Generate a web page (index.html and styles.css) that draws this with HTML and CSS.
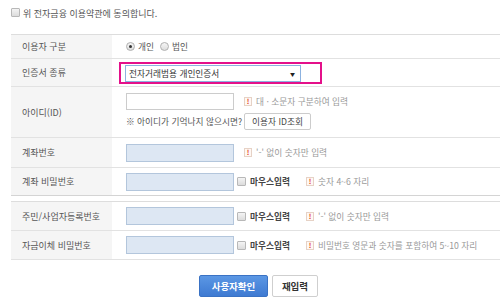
FILE: index.html
```html
<!DOCTYPE html>
<html lang="ko">
<head>
    <meta charset="UTF-8">
    <title>이용자 확인</title>
    <link rel="stylesheet" href="styles.css">
</head>
<body>
    <div class="agree">
        <span class="check"></span>
        <span>위 전자금융 이용약관에 동의합니다.</span>
    </div>

    <div class="form-table">
        <div class="row row-type">
            <div class="label">이용자 구분</div>
            <div class="field">
                <span class="radio on"></span><span class="radio-text">개인</span>
                <span class="radio"></span><span class="radio-text">법인</span>
            </div>
        </div>
        <div class="row row-cert">
            <div class="label">인증서 종류</div>
            <div class="field field-cert">
                <div class="highlight">
                    <div class="select">
                        <span>전자거래범용 개인인증서</span>
                        <span class="arrow">▼</span>
                    </div>
                </div>
            </div>
        </div>
        <div class="row row-id">
            <div class="label">아이디(ID)</div>
            <div class="field field-stack">
                <div class="line">
                    <span class="input white"></span>
                    <span class="warn">!</span>
                    <span class="hint">대 · 소문자 구분하여 입력</span>
                </div>
                <div class="line line-find">
                    <span class="find-text">※ 아이디가 기억나지 않으시면?</span>
                    <span class="small-btn">이용자 ID조회</span>
                </div>
            </div>
        </div>
        <div class="row row-account">
            <div class="label">계좌번호</div>
            <div class="field">
                <span class="input"></span>
                <span class="warn">!</span>
                <span class="hint">'-' 없이 숫자만 입력</span>
            </div>
        </div>
        <div class="row row-last">
            <div class="label">계좌 비밀번호</div>
            <div class="field">
                <span class="input"></span>
                <span class="check mouse"></span>
                <span class="mouse-text">마우스입력</span>
                <span class="warn">!</span>
                <span class="hint">숫자 4~6 자리</span>
            </div>
        </div>
    </div>

    <div class="form-table second">
        <div class="row">
            <div class="label">주민/사업자등록번호</div>
            <div class="field">
                <span class="input"></span>
                <span class="check mouse"></span>
                <span class="mouse-text">마우스입력</span>
                <span class="warn">!</span>
                <span class="hint">'-' 없이 숫자만 입력</span>
            </div>
        </div>
        <div class="row">
            <div class="label">자금이체 비밀번호</div>
            <div class="field">
                <span class="input"></span>
                <span class="check mouse"></span>
                <span class="mouse-text">마우스입력</span>
                <span class="warn">!</span>
                <span class="hint">비밀번호 영문과 숫자를 포함하여 5~10 자리</span>
            </div>
        </div>
    </div>

    <div class="buttons">
        <span class="btn btn-primary">사용자확인</span>
        <span class="btn btn-reset">재입력</span>
    </div>
</body>
</html>
```

FILE: styles.css
```css
* {
    margin: 0;
    padding: 0;
    box-sizing: border-box;
}

body {
    background-color: #ffffff;
    color: #555555;
    font-family: "Noto Sans CJK KR", "Noto Sans", sans-serif;
    font-size: 8.7px;
    width: 500px;
    height: 300px;
    overflow: hidden;
}

.agree {
    height: 34px;
    padding: 7px 0 0 11px;
    display: flex;
    align-items: flex-start;
    gap: 3px;
    color: #555555;
    font-size: 9px;
}

.agree .check {
    margin-top: 1px;
}

.check {
    display: inline-block;
    width: 9px;
    height: 9px;
    border: 1px solid #b8b8b8;
    border-radius: 1px;
    background: linear-gradient(#f4f4f4, #dcdcdc);
    flex: none;
}

.form-table {
    margin-left: 11px;
    width: 489px;
    border-top: 1px solid #dddddd;
}

.form-table.second {
    margin-top: 5px;
}

.row {
    display: flex;
    height: 29px;
    border-bottom: 1px solid #e2e2e2;
}

.row-type {
    height: 24px;
}

.row-cert {
    height: 28px;
}

.row-id {
    height: 51px;
}

.row-account {
    height: 30px;
}

.row-last {
    height: 28px;
    border-bottom-color: #d4d4d4;
}

.label {
    width: 101px;
    flex: none;
    background-color: #f5f5f5;
    padding-left: 11px;
    display: flex;
    align-items: center;
    color: #555555;
    font-size: 9px;
}

.field {
    flex: 1;
    display: flex;
    align-items: center;
    padding-left: 14px;
}

.radio {
    width: 9px;
    height: 9px;
    border: 1px solid #b0b0b0;
    border-radius: 50%;
    background: linear-gradient(#f6f6f6, #dddddd);
    display: inline-flex;
    align-items: center;
    justify-content: center;
    flex: none;
}

.radio.on::after {
    content: "";
    width: 3px;
    height: 3px;
    border-radius: 50%;
    background-color: #333333;
}

.radio-text {
    margin: 0 6px 0 3px;
    color: #555555;
}

.field-cert {
    padding-left: 7px;
}

.highlight {
    width: 203px;
    height: 22px;
    border: 2px solid #e4108a;
    padding: 1px 0 0 4px;
}

.select {
    width: 176px;
    height: 17px;
    border: 1px solid #8cb2e0;
    background-color: #ffffff;
    display: flex;
    align-items: center;
    justify-content: space-between;
    padding: 0 5px 0 3px;
    color: #333333;
}

.arrow {
    font-size: 5px;
    color: #222222;
}

.field-stack {
    flex-direction: column;
    align-items: flex-start;
    justify-content: flex-start;
    padding-top: 6px;
}

.line {
    display: flex;
    align-items: center;
}

.line-find {
    margin-top: 3px;
}

.input {
    display: inline-block;
    width: 108px;
    height: 18px;
    border: 1px solid #b3c6dc;
    background-color: #dde7f3;
    flex: none;
}

.input.white {
    background-color: #ffffff;
    border-color: #cccccc;
    height: 17px;
}

.warn {
    width: 8px;
    height: 9px;
    border: 1px solid #e6d2c6;
    background-color: #fff8f4;
    color: #e2451f;
    font-size: 7px;
    font-weight: bold;
    line-height: 7px;
    text-align: center;
    margin: 0 4px 0 10px;
    flex: none;
}

.mouse {
    margin-left: 3px;
}

.mouse-text {
    margin-left: 4px;
    color: #444444;
    font-weight: bold;
}

.mouse-text + .warn {
    margin-left: 16px;
}

.hint {
    color: #999999;
}

.find-text {
    color: #555555;
}

.small-btn {
    margin-left: 2px;
    height: 17px;
    padding: 0 7px;
    border: 1px solid #cccccc;
    border-radius: 2px;
    background-color: #ffffff;
    color: #444444;
    display: inline-flex;
    align-items: center;
}

.buttons {
    display: flex;
    padding: 15px 0 0 199px;
    gap: 4px;
}

.btn {
    height: 22px;
    border-radius: 2px;
    display: inline-flex;
    align-items: center;
    justify-content: center;
    font-weight: bold;
    font-size: 9.5px;
}

.btn-primary {
    width: 69px;
    background: linear-gradient(#5b97e4, #3e7ad2);
    border: 1px solid #3a72c4;
    color: #ffffff;
}

.btn-reset {
    width: 46px;
    background-color: #ffffff;
    border: 1px solid #cfcfcf;
    color: #333333;
}
```
